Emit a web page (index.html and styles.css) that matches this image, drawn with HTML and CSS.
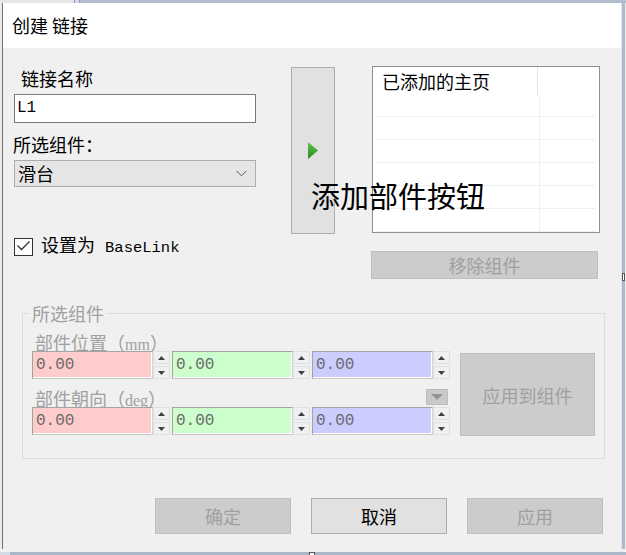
FILE: index.html
```html
<!DOCTYPE html>
<html lang="zh-CN">
<head>
<meta charset="utf-8">
<title>创建 链接</title>
<link rel="stylesheet" href="styles.css">
</head>
<body>
<div class="window">
  <div class="top-edge"><span class="top-edge-left"></span><span class="top-edge-grip"></span><span class="top-edge-right"></span></div>
  <div class="middle">
    <div class="left-edge"></div>
    <div class="dialog">
      <div class="titlebar">创建 链接</div>
      <div class="content">
        <div class="top-section">
          <div class="left-col">
            <div class="label name-label">链接名称</div>
            <div class="textbox mono">L1</div>
            <div class="label sel-label">所选组件：</div>
            <div class="combo">
              <span>滑台</span>
              <svg class="chevron" width="11" height="7" viewBox="0 0 11 7"><polyline points="0.5,0.8 5.5,5.8 10.5,0.8" fill="none" stroke="#555" stroke-width="1"/></svg>
            </div>
            <div class="check-row">
              <span class="checkbox"><svg width="17" height="16" viewBox="0 0 17 16"><polyline points="2.5,6.5 6.5,10.5 14.5,2.5" fill="none" stroke="#333" stroke-width="1.3"/></svg></span>
              <span class="check-text">设置为 <span class="mono">BaseLink</span></span>
            </div>
          </div>
          <div class="add-btn">
            <svg width="10" height="17" viewBox="0 0 10 17"><defs><linearGradient id="g" x1="0" y1="0" x2="0" y2="1"><stop offset="0" stop-color="#66c455"/><stop offset="1" stop-color="#23891a"/></linearGradient></defs><polygon points="0,0 10,8.5 0,17" fill="url(#g)"/></svg>
          </div>
          <div class="right-col">
            <div class="listbox">
              <div class="list-header"><div class="list-head-cell">已添加的主页</div></div>
              <div class="list-rows">
                <div class="list-row"><div class="list-cell"></div></div>
                <div class="list-row"><div class="list-cell"></div></div>
                <div class="list-row"><div class="list-cell"></div></div>
                <div class="list-row"><div class="list-cell"></div></div>
                <div class="list-row"><div class="list-cell"></div></div>
                <div class="list-row"><div class="list-cell"></div></div>
              </div>
            </div>
            <div class="btn disabled remove-btn">移除组件</div>
          </div>
          <div class="overlay-note">添加部件按钮</div>
        </div>

        <fieldset class="group">
          <legend>所选组件</legend>
          <div class="group-body">
            <div class="spin-area">
              <div class="sub-label">部件位置（<span class="unit">mm</span>）</div>
              <div class="spin-row">
                <div class="spin"><div class="spin-field red mono">0.00</div><div class="spin-btns"><span class="sb"><svg width="7" height="4" viewBox="0 0 7 4"><polygon points="0,4 3.5,0 7,4" fill="#404040"/></svg></span><span class="sb"><svg width="7" height="4" viewBox="0 0 7 4"><polygon points="0,0 3.5,4 7,0" fill="#404040"/></svg></span></div></div>
                <div class="spin"><div class="spin-field green mono">0.00</div><div class="spin-btns"><span class="sb"><svg width="7" height="4" viewBox="0 0 7 4"><polygon points="0,4 3.5,0 7,4" fill="#404040"/></svg></span><span class="sb"><svg width="7" height="4" viewBox="0 0 7 4"><polygon points="0,0 3.5,4 7,0" fill="#404040"/></svg></span></div></div>
                <div class="spin"><div class="spin-field blue mono">0.00</div><div class="spin-btns"><span class="sb"><svg width="7" height="4" viewBox="0 0 7 4"><polygon points="0,4 3.5,0 7,4" fill="#404040"/></svg></span><span class="sb"><svg width="7" height="4" viewBox="0 0 7 4"><polygon points="0,0 3.5,4 7,0" fill="#404040"/></svg></span></div></div>
              </div>
              <div class="sub-label-row">
                <div class="sub-label">部件朝向（<span class="unit">deg</span>）</div>
                <div class="mini-drop"><svg width="12" height="6" viewBox="0 0 12 6"><polygon points="0,0 12,0 6,6" fill="#949494"/></svg></div>
              </div>
              <div class="spin-row">
                <div class="spin"><div class="spin-field red mono">0.00</div><div class="spin-btns"><span class="sb"><svg width="7" height="4" viewBox="0 0 7 4"><polygon points="0,4 3.5,0 7,4" fill="#404040"/></svg></span><span class="sb"><svg width="7" height="4" viewBox="0 0 7 4"><polygon points="0,0 3.5,4 7,0" fill="#404040"/></svg></span></div></div>
                <div class="spin"><div class="spin-field green mono">0.00</div><div class="spin-btns"><span class="sb"><svg width="7" height="4" viewBox="0 0 7 4"><polygon points="0,4 3.5,0 7,4" fill="#404040"/></svg></span><span class="sb"><svg width="7" height="4" viewBox="0 0 7 4"><polygon points="0,0 3.5,4 7,0" fill="#404040"/></svg></span></div></div>
                <div class="spin"><div class="spin-field blue mono">0.00</div><div class="spin-btns"><span class="sb"><svg width="7" height="4" viewBox="0 0 7 4"><polygon points="0,4 3.5,0 7,4" fill="#404040"/></svg></span><span class="sb"><svg width="7" height="4" viewBox="0 0 7 4"><polygon points="0,0 3.5,4 7,0" fill="#404040"/></svg></span></div></div>
              </div>
            </div>
            <div class="btn disabled apply-comp-btn">应用到组件</div>
          </div>
        </fieldset>

        <div class="footer">
          <div class="btn disabled foot-btn">确定</div>
          <div class="btn foot-btn">取消</div>
          <div class="btn disabled foot-btn">应用</div>
        </div>
      </div>
    </div>
    <div class="right-edge"><span class="right-grip"></span></div>
  </div>
  <div class="bottom-edge"><span class="bottom-edge-left"></span><span class="bottom-edge-mid"></span><span class="bottom-grip"></span><span class="bottom-edge-right"></span></div>
</div>
</body>
</html>
```

FILE: styles.css
```css
* { box-sizing: border-box; }
html, body { margin: 0; padding: 0; }
body {
  width: 626px;
  height: 555px;
  overflow: hidden;
  background: #f0f0f0;
  font-family: "Noto Sans CJK SC", "Noto Sans", sans-serif;
  font-size: 18px;
  color: #000;
}
.mono { font-family: "Liberation Mono", "Noto Sans CJK SC", monospace; }

.window { display: flex; flex-direction: column; width: 626px; height: 555px; }

.top-edge { height: 3px; display: flex; }
.top-edge-left { width: 74px; background: #e6e6e6; }
.top-edge-grip { width: 6px; background: #d3dbe5; border-left: 1px solid #8a9cb3; border-right: 1px solid #8a9cb3; }
.top-edge-right { flex: 1; background: #b0bdcd; }

.middle { display: flex; height: 546px; }
.left-edge { width: 3px; background: #ececec; border-right: 1px solid #6f6f6f; }
.dialog { width: 618px; display: flex; flex-direction: column; }
.right-edge { width: 5px; border-left: 1px solid #e4e4e4; border-right: 1px solid #ededed; background: #aebbcc; display: flex; flex-direction: column; }
.right-grip { margin-top: 270px; height: 8px; background: #fff; border: 1px solid #555; }

.bottom-edge { height: 6px; display: flex; border-top: 3px solid #f0f0f0; }
.bottom-edge-left { width: 10px; background: #d3dbe6; }
.bottom-edge-mid { width: 299px; background: #aab7c8; }
.bottom-grip { width: 6px; background: #fff; border: 1px solid #555; border-bottom: none; }
.bottom-edge-right { flex: 1; background: #aab7c8; }

.titlebar {
  height: 45px;
  background: #fff;
  padding-left: 9px;
  line-height: 45px;
  font-size: 18px;
  white-space: nowrap;
}
.content { flex: 1; background: #f0f0f0; display: flex; flex-direction: column; }

.top-section {
  position: relative;
  display: flex;
  align-items: flex-start;
  margin: 18px 0 0 11px;
}
.left-col { width: 242px; display: flex; flex-direction: column; }
.label { line-height: 24px; height: 24px; white-space: nowrap; }
.name-label { padding-left: 7px; }
.sel-label { margin-top: 9px; margin-left: -1px; }
.textbox {
  margin-top: 4px;
  height: 29px;
  background: #fff;
  border: 1px solid #7a7a7a;
  padding-left: 2px;
  font-size: 16px;
  line-height: 27px;
}
.combo {
  margin-top: 4px;
  height: 27px;
  background: #e5e5e5;
  border: 1px solid #adadad;
  display: flex;
  align-items: center;
  justify-content: space-between;
  padding: 0 8px 0 3px;
  line-height: 25px;
}
.chevron { display: block; }
.check-row {
  margin-top: 50px;
  height: 19px;
  display: flex;
  align-items: center;
}
.checkbox {
  width: 19px;
  height: 18px;
  border: 1px solid #333;
  background: #fff;
  display: flex;
  align-items: center;
  justify-content: center;
}
.checkbox svg { display: block; }
.check-text { margin-left: 8px; line-height: 19px; white-space: nowrap; }
.check-text .mono { font-size: 15.5px; margin-left: 6px; }

.add-btn {
  margin: 1px 0 0 35px;
  width: 44px;
  height: 167px;
  background: #e1e1e1;
  border: 1px solid #adadad;
  display: flex;
  align-items: center;
  justify-content: center;
}
.add-btn svg { display: block; }

.right-col { margin-left: 37px; display: flex; flex-direction: column; }
.listbox {
  width: 228px;
  height: 167px;
  background: #fff;
  border: 1px solid #8c8f94;
  overflow: hidden;
}
.list-header { height: 28px; display: flex; }
.list-head-cell {
  width: 165px;
  border-right: 1px solid #e3e3e3;
  padding-left: 9px;
  line-height: 28px;
  white-space: nowrap;
}
.list-rows { padding: 0 3px; }
.list-row { height: 23px; border-bottom: 1px solid #efefef; display: flex; }
.list-row:first-child { height: 22px; }
.list-cell { width: 164px; border-right: 1px solid #efefef; }

.btn {
  display: flex;
  align-items: center;
  justify-content: center;
  background: #e1e1e1;
  border: 1px solid #adadad;
  color: #000;
  white-space: nowrap;
}
.btn.disabled { background: #cccccc; border-color: #bfbfbf; color: #a0a0a0; }
.remove-btn { margin: 18px 0 0 -1px; width: 227px; height: 28px; }

.overlay-note {
  position: absolute;
  left: 297px;
  top: 111px;
  font-size: 29px;
  line-height: 36px;
  white-space: nowrap;
  color: #000;
}

.group {
  margin: 22px 0 0 19px;
  width: 583px;
  border: 1px solid #dcdcdc;
  padding: 8px 9px 22px 9px;
  min-width: 0;
}
.group legend {
  padding: 0 2px;
  margin-left: -2px;
  line-height: 24px;
  color: #a0a0a0;
}
.group-body { display: flex; gap: 10px; }
.spin-area { width: 418px; display: flex; flex-direction: column; }
.sub-label {
  line-height: 18px;
  height: 18px;
  padding-left: 3px;
  color: #a0a0a0;
  white-space: nowrap;
}
.unit { font-family: "Liberation Serif", serif; font-size: 16px; }
.sub-label-row { display: flex; justify-content: space-between; align-items: flex-start; margin-top: 10px; }
.mini-drop {
  width: 22px;
  height: 16px;
  margin-right: 2px;
  background: #c9c9c9;
  border: 1px solid #bcbcbc;
  display: flex;
  align-items: center;
  justify-content: center;
}
.mini-drop svg { display: block; }
.spin-row { display: flex; gap: 2px; }
.spin { display: flex; width: 138px; height: 28px; }
.spin-field {
  width: 121px;
  height: 28px;
  border: 1px solid #a3a3a3;
  border-right-color: #d6d6d6;
  border-bottom-color: #c8c8c8;
  box-shadow: inset -1px -1px 0 #fff;
  padding-left: 3px;
  font-size: 16px;
  line-height: 26px;
  color: #6a6a6a;
}
.red { background: #ffcccc; }
.green { background: #ccffcc; }
.blue { background: #ccccff; }
.spin-btns { width: 17px; display: flex; flex-direction: column; justify-content: space-between; }
.sb {
  height: 13px;
  background: #f0f0f0;
  border: 1px solid #e0e0e0;
  display: flex;
  align-items: center;
  justify-content: center;
}
.sb svg { display: block; }
.apply-comp-btn { width: 135px; height: 83px; margin-top: 20px; }

.footer {
  display: flex;
  justify-content: flex-end;
  gap: 20px;
  margin-top: 39px;
  padding-right: 18px;
}
.foot-btn { width: 136px; height: 36px; }
```
